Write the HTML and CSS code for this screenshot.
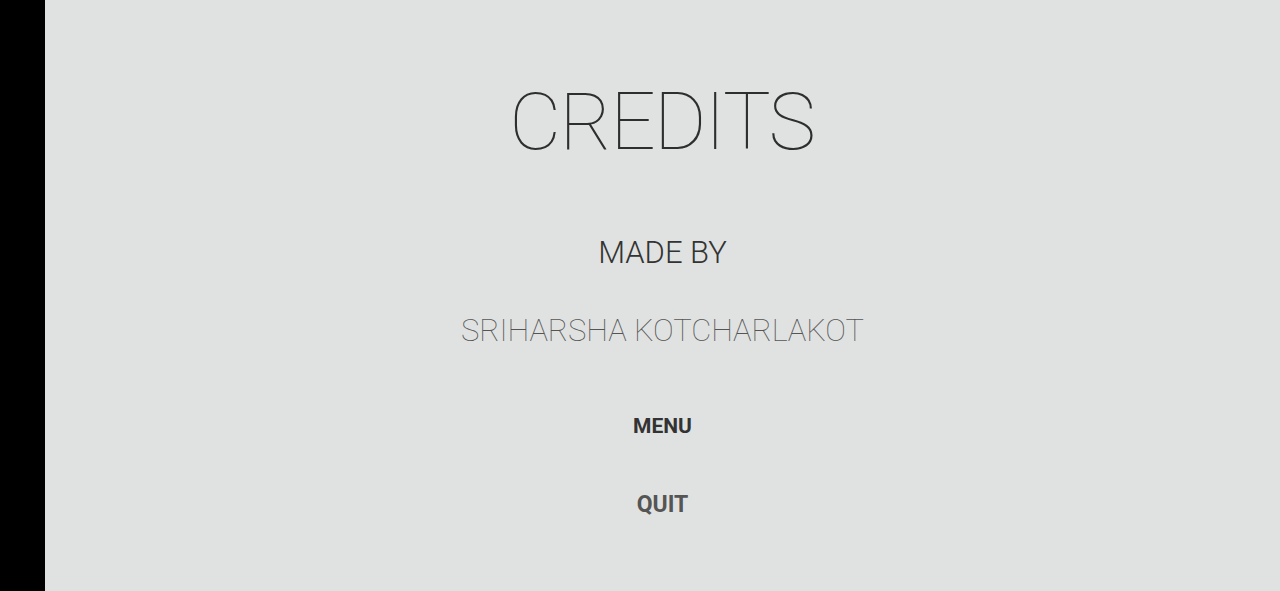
FILE: index.html
```html
<!DOCTYPE html>
<html>
<head>
<meta charset="utf-8">
<link rel="stylesheet" href="styles.css">
</head>
<body>
<div class="screen">
  <div class="bezel"></div>
  <main class="content">
    <h1 class="title">CREDITS</h1>
    <p class="label">MADE BY</p>
    <p class="name">SRIHARSHA KOTCHARLAKOT</p>
    <nav class="buttons">
      <button class="btn btn-menu">MENU</button>
      <button class="btn btn-quit">QUIT</button>
    </nav>
  </main>
</div>
</body>
</html>
```

FILE: styles.css
```css
html, body {
  margin: 0;
  padding: 0;
  width: 1280px;
  height: 591px;
  overflow: hidden;
}
body {
  font-family: Roboto, "Liberation Sans", sans-serif;
  background: #e0e2e1;
}
.screen {
  display: flex;
  width: 1280px;
  height: 591px;
}
.bezel {
  width: 45px;
  flex: 0 0 45px;
  background: #000;
}
.content {
  flex: 1;
  background: #e0e2e1;
  display: flex;
  flex-direction: column;
  align-items: center;
}
.title {
  margin: 74px 0 0;
  font-size: 80px;
  font-weight: 100;
  line-height: 96px;
  color: #2e2e2e;
  letter-spacing: -1.6px;
  text-indent: -1.6px;
}
.label {
  margin: 63px 0 0;
  font-size: 31px;
  font-weight: 300;
  line-height: 40px;
  color: #333;
}
.name {
  margin: 38px 0 0;
  font-size: 31px;
  font-weight: 100;
  line-height: 40px;
  color: #555;
  letter-spacing: -0.1px;
}
.buttons {
  margin-top: 37px;
  display: flex;
  flex-direction: column;
  align-items: center;
}
.btn {
  width: 255px;
  height: 76px;
  border: none;
  background: transparent;
  font-family: Roboto, "Liberation Sans", sans-serif;
  font-size: 21px;
  font-weight: 700;
  padding: 0;
}
.btn-menu { color: #333; }
.btn-quit { color: #555; margin-top: 2px; font-size: 23px; }
```
